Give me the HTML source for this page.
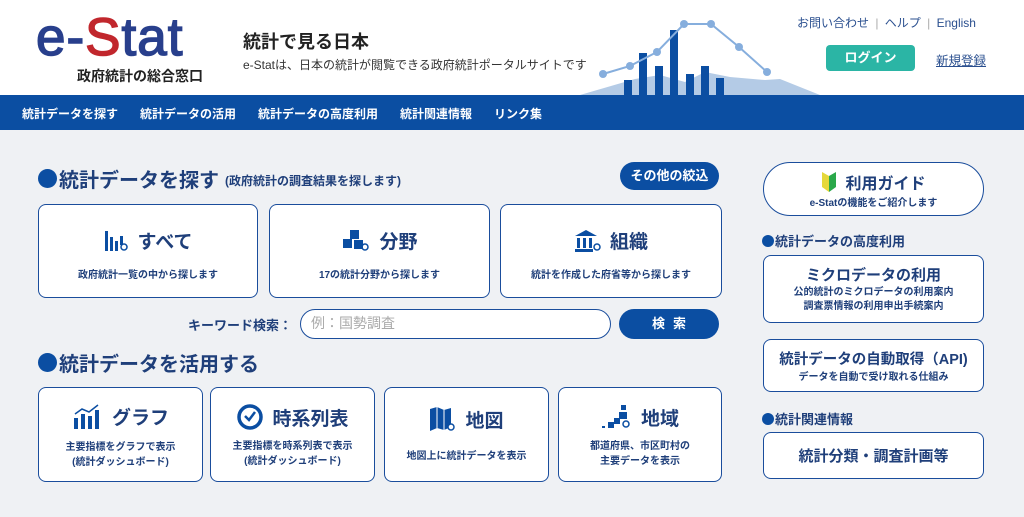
<!DOCTYPE html>
<html><head><meta charset="utf-8"><style>
*{margin:0;padding:0;box-sizing:border-box}
body{width:1024px;height:517px;overflow:hidden;background:#eff1f4;font-family:"Liberation Sans","Noto Sans CJK JP",sans-serif;color:#1f3f7a;position:relative}
.a{position:absolute}
.hdr{left:0;top:0;width:1024px;height:95px;background:#fff}
.nav{left:0;top:95px;width:1024px;height:35px;background:#0b4ea2}
.nav span{position:absolute;top:10px;color:#fff;font-size:12px;font-weight:bold}
.card{position:absolute;background:#fff;border:1.5px solid #1a4d9c;border-radius:8px;text-align:center;color:#1f3f7a}
.card .t{font-size:19px;font-weight:bold;display:flex;align-items:center;justify-content:center;gap:8px}
.card .s{font-size:10px;font-weight:bold;line-height:15px}
.h{font-weight:bold;color:#1f3f7a;display:flex;align-items:center}
.dot{display:inline-block;width:19px;height:19px;border-radius:50%;background:#0b4ea2;margin-right:2px}
.dot.sm{width:12px;height:12px;margin-right:1px}
.btn{position:absolute;background:#0b4ea2;color:#fff;font-weight:bold;border-radius:15px;text-align:center;font-size:13px}
</style></head><body>
<div class="a hdr"></div>
<div class="a" style="left:36px;top:8px;font-size:53px;font-weight:normal;letter-spacing:1px;color:#283f8c;line-height:60px;-webkit-text-stroke:1.5px #283f8c">e-<span style="color:#c1272d;-webkit-text-stroke:1.5px #c1272d">S</span>tat</div>
<div class="a" style="left:77px;top:66px;font-size:14px;font-weight:bold;color:#222">政府統計の総合窓口</div>
<div class="a" style="left:243px;top:28px;font-size:18px;font-weight:bold;color:#222">統計で見る日本</div>
<div class="a" style="left:243px;top:56px;font-size:12px;color:#333">e-Statは、日本の統計が閲覧できる政府統計ポータルサイトです</div>
<svg class="a" style="left:580px;top:15px" width="240" height="80">
<polygon points="0,80 55,64 80,60 105,67 125,57 150,62 185,65 200,64 240,80" fill="#b4cbe6"/>
<g fill="#0b4ea2"><rect x="44" y="65" width="8" height="15"/><rect x="59" y="38" width="8" height="42"/><rect x="75" y="51" width="8" height="29"/><rect x="90" y="15" width="8" height="65"/><rect x="106" y="59" width="8" height="21"/><rect x="121" y="51" width="8" height="29"/><rect x="136" y="63" width="8" height="17"/></g>
<polyline points="23,59 50,51 77,37 104,9 131,9 159,32 187,57" fill="none" stroke="#86aedd" stroke-width="2"/>
<g fill="#86aedd"><circle cx="23" cy="59" r="4"/><circle cx="50" cy="51" r="4"/><circle cx="77" cy="37" r="4"/><circle cx="104" cy="9" r="4"/><circle cx="131" cy="9" r="4"/><circle cx="159" cy="32" r="4"/><circle cx="187" cy="57" r="4"/></g>
</svg>
<div class="a" style="left:797px;top:14px;font-size:12px;color:#2a4f8f">お問い合わせ <span style="color:#aaa;margin:0 3px">|</span> ヘルプ <span style="color:#aaa;margin:0 3px">|</span> English</div>
<div class="a" style="left:826px;top:45px;width:89px;height:26px;background:#2bb5a5;border-radius:4px;color:#fff;font-size:13px;font-weight:bold;text-align:center;line-height:26px">ログイン</div>
<div class="a" style="left:936px;top:50px;font-size:12.5px;color:#2a4f8f;text-decoration:underline">新規登録</div>
<div class="a nav"><span style="left:22px">統計データを探す</span><span style="left:140px">統計データの活用</span><span style="left:258px">統計データの高度利用</span><span style="left:400px">統計関連情報</span><span style="left:494px">リンク集</span></div>

<div class="a h" style="left:38px;top:164px;font-size:20px"><span class="dot"></span>統計データを探す <span style="font-size:12px;margin-left:6px;margin-top:4px">(政府統計の調査結果を探します)</span></div>
<div class="btn" style="left:620px;top:162px;width:99px;height:28px;line-height:28px">その他の絞込</div>
<div class="card" style="left:38px;top:204px;width:220px;height:94px"><div class="t" style="margin-top:22px"><svg width="26" height="24"><g fill="#0b4ea2"><rect x="1" y="2" width="3" height="20"/><rect x="6" y="8" width="3" height="14"/><rect x="11" y="12" width="3" height="10"/><rect x="16" y="7" width="3" height="9"/></g><circle cx="20" cy="18" r="3" fill="none" stroke="#0b4ea2" stroke-width="1.5"/></svg>すべて</div><div class="s" style="margin-top:14px">政府統計一覧の中から探します</div></div>
<div class="card" style="left:269px;top:204px;width:221px;height:94px"><div class="t" style="margin-top:22px"><svg width="30" height="24"><g fill="#0b4ea2"><rect x="9" y="1" width="9" height="9"/><rect x="2" y="10" width="9" height="9"/><rect x="13" y="11" width="9" height="9"/></g><circle cx="24" cy="18" r="3" fill="none" stroke="#0b4ea2" stroke-width="1.5"/></svg>分野</div><div class="s" style="margin-top:14px">17の統計分野から探します</div></div>
<div class="card" style="left:500px;top:204px;width:222px;height:94px"><div class="t" style="margin-top:22px"><svg width="28" height="24"><g fill="#0b4ea2"><polygon points="12,1 1,7 23,7"/><rect x="3" y="9" width="3" height="10"/><rect x="9" y="9" width="3" height="10"/><rect x="15" y="9" width="3" height="10"/><rect x="1" y="20" width="18" height="3"/></g><circle cx="23" cy="18" r="3" fill="none" stroke="#0b4ea2" stroke-width="1.5"/></svg>組織</div><div class="s" style="margin-top:14px">統計を作成した府省等から探します</div></div>

<div class="a h" style="left:188px;top:315px;font-size:13px">キーワード検索：</div>
<div class="a" style="left:300px;top:309px;width:311px;height:30px;background:#fff;border:1.5px solid #1a4d9c;border-radius:15px;padding-left:10px;line-height:27px;font-size:14px;color:#aaa">例：国勢調査</div>
<div class="btn" style="left:619px;top:309px;width:100px;height:30px;line-height:30px;letter-spacing:8px;text-indent:8px">検索</div>

<div class="a h" style="left:38px;top:348px;font-size:20px"><span class="dot"></span>統計データを活用する</div>
<div class="card" style="left:38px;top:387px;width:165px;height:95px"><div class="t" style="margin-top:15px"><svg width="32" height="26"><g fill="#0b4ea2"><rect x="2" y="14" width="4" height="11"/><rect x="9" y="10" width="4" height="15"/><rect x="16" y="12" width="4" height="13"/><rect x="23" y="6" width="4" height="19"/></g><polyline points="3,10 10,5 17,8 26,1" fill="none" stroke="#0b4ea2" stroke-width="1.5"/></svg>グラフ</div><div class="s" style="margin-top:10px">主要指標をグラフで表示<br>(統計ダッシュボード)</div></div>
<div class="card" style="left:210px;top:387px;width:165px;height:95px"><div class="t" style="margin-top:15px"><svg width="28" height="28"><circle cx="14" cy="14" r="11" fill="none" stroke="#0b4ea2" stroke-width="3.5"/><polyline points="9,13 13,17 19,9" fill="none" stroke="#0b4ea2" stroke-width="2.5"/></svg>時系列表</div><div class="s" style="margin-top:8px">主要指標を時系列表で表示<br>(統計ダッシュボード)</div></div>
<div class="card" style="left:384px;top:387px;width:165px;height:95px"><div class="t" style="margin-top:18px"><svg width="28" height="26"><polygon points="1,2 8,0 15,3 22,1 22,20 15,23 8,21 1,24" fill="#0b4ea2"/><line x1="8" y1="0" x2="8" y2="21" stroke="#fff"/><line x1="15" y1="3" x2="15" y2="23" stroke="#fff"/><circle cx="22" cy="20" r="3" fill="#fff" stroke="#0b4ea2" stroke-width="1.5"/></svg>地図</div><div class="s" style="margin-top:16px">地図上に統計データを表示</div></div>
<div class="card" style="left:558px;top:387px;width:164px;height:95px"><div class="t" style="margin-top:15px"><svg width="32" height="28"><g fill="#0b4ea2"><rect x="20" y="2" width="5" height="5"/><rect x="18" y="9" width="8" height="7"/><rect x="13" y="15" width="6" height="6"/><rect x="7" y="19" width="6" height="6"/><rect x="1" y="23" width="3" height="2"/></g><circle cx="25" cy="21" r="3" fill="none" stroke="#0b4ea2" stroke-width="1.5"/></svg>地域</div><div class="s" style="margin-top:8px">都道府県、市区町村の<br>主要データを表示</div></div>

<div class="card" style="left:763px;top:162px;width:221px;height:54px;border-radius:27px"><div class="t" style="font-size:16px;margin-top:7px"><svg width="16" height="22"><polygon points="1,1 8,5 8,21 1,16" fill="#e5d83a"/><polygon points="8,5 15,1 15,16 8,21" fill="#2aa84a"/></svg>利用ガイド</div><div class="s" style="margin-top:2px">e-Statの機能をご紹介します</div></div>
<div class="a h" style="left:762px;top:231px;font-size:13px"><span class="dot sm"></span>統計データの高度利用</div>
<div class="card" style="left:763px;top:255px;width:221px;height:68px"><div class="t" style="font-size:15px;margin-top:8px">ミクロデータの利用</div><div class="s" style="margin-top:1px;line-height:14px">公的統計のミクロデータの利用案内<br>調査票情報の利用申出手続案内</div></div>
<div class="card" style="left:763px;top:339px;width:221px;height:53px"><div class="t" style="font-size:14.5px;margin-top:8px">統計データの自動取得（API)</div><div class="s" style="margin-top:1px">データを自動で受け取れる仕組み</div></div>
<div class="a h" style="left:762px;top:409px;font-size:13px"><span class="dot sm"></span>統計関連情報</div>
<div class="card" style="left:763px;top:432px;width:221px;height:47px"><div class="t" style="font-size:15px;margin-top:12px">統計分類・調査計画等</div></div>
</body></html>
